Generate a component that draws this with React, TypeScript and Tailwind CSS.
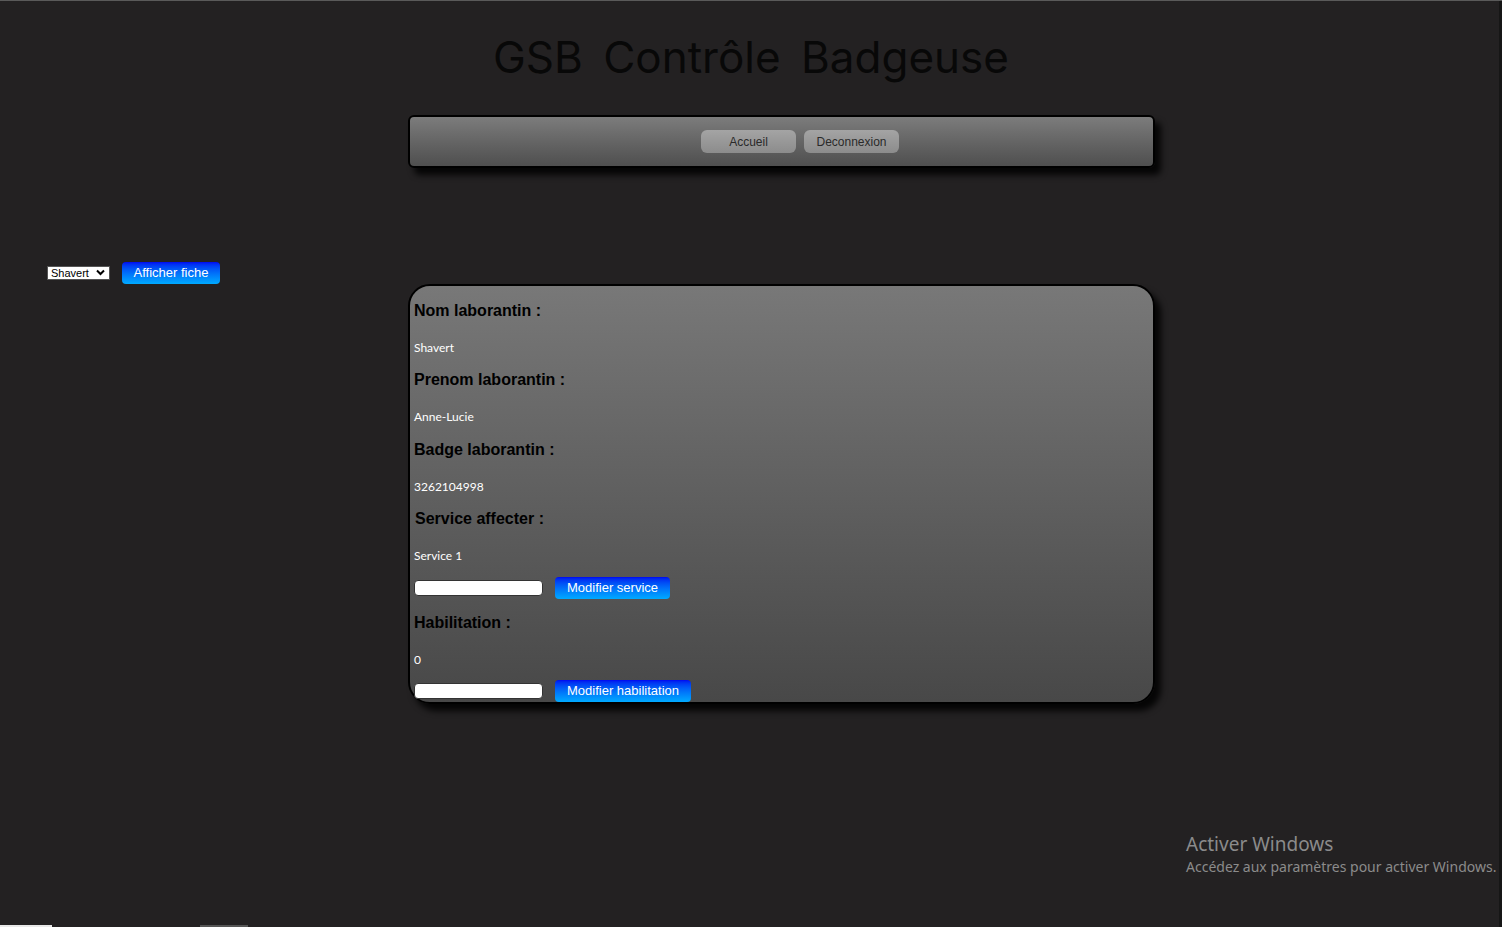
import React from 'react';

const sans = { fontFamily: 'Arial, "Liberation Sans", sans-serif' };

function Field({ label, value, indent }: { label: string; value: string; indent?: boolean }) {
  return (
    <>
      <h3
        className={`text-[16px] leading-[18px] font-bold text-black mb-[21px] ${indent ? 'pl-[1px]' : ''}`}
        style={sans}
      >
        {label}
      </h3>
      <p className="text-[12px] leading-[14px] text-white font-['Lato',sans-serif]">{value}</p>
    </>
  );
}

function EditRow({ label }: { label: string }) {
  return (
    <div className="flex items-center gap-3 h-[22px]">
      <input className="w-[129px] h-[16px] bg-white rounded-[4px] border border-[#333]" />
      <button
        className="h-[22px] px-3 rounded-[4px] bg-gradient-to-b from-[#0000f0] to-[#00aaff] text-white text-[13px] leading-[22px]"
        style={sans}
      >
        {label}
      </button>
    </div>
  );
}

export default function App() {
  return (
    <div className="relative w-full h-[927px] overflow-hidden bg-[#232122] border-t border-[#5a5a5a]">
      <h1 className="pt-[26px] text-center text-[44px] leading-[60px] font-normal text-[#080808] font-['Inter',sans-serif] [word-spacing:8px]">
        GSB Contrôle Badgeuse
      </h1>

      <nav className="mt-[28px] ml-[408px] w-[747px] h-[53px] rounded-[6px] border-2 border-black bg-gradient-to-b from-[#7c7c7c] to-[#4f4f4f] shadow-[6px_7px_6px_rgba(0,0,0,0.85)] flex items-center justify-center gap-2 pl-[37px]">
        <button className="w-[95px] h-[23px] rounded-[6px] bg-gradient-to-b from-[#a4a4a4] to-[#8c8c8c] text-[#2a2a2a] text-[12px] font-['Liberation_Sans_Narrow',sans-serif]">
          Accueil
        </button>
        <button className="w-[95px] h-[23px] rounded-[6px] bg-gradient-to-b from-[#a4a4a4] to-[#8c8c8c] text-[#2a2a2a] text-[12px] font-['Liberation_Sans_Narrow',sans-serif]">
          Deconnexion
        </button>
      </nav>

      <div className="mt-[93px] flex items-center h-[23px]">
        <div
          className="ml-[47px] w-[63px] h-[14px] bg-white border border-[#555] flex items-center justify-between px-[3px] text-[11px] leading-[12px] text-black"
          style={sans}
        >
          <span>Shavert</span>
          <svg width="9" height="7" viewBox="0 0 9 7" className="mr-[1px]">
            <path d="M1 1.5 L4.5 5 L8 1.5" stroke="black" strokeWidth="2" fill="none" />
          </svg>
        </div>
        <button
          className="ml-[12px] w-[98px] h-[22px] rounded-[4px] bg-gradient-to-b from-[#0000f0] to-[#00aaff] text-white text-[13px] leading-[22px]"
          style={sans}
        >
          Afficher fiche
        </button>
      </div>

      <section className="ml-[408px] w-[747px] h-[420px] rounded-[22px] border-2 border-black bg-gradient-to-b from-[#787878] to-[#484848] shadow-[6px_7px_6px_rgba(0,0,0,0.85)] pl-[4px] pt-[16px] flex flex-col">
        <Field label="Nom laborantin :" value="Shavert" />
        <div className="h-[16px]" />
        <Field label="Prenom laborantin :" value="Anne-Lucie" />
        <div className="h-[17px]" />
        <Field label="Badge laborantin :" value="3262104998" />
        <div className="h-[16px]" />
        <Field label="Service affecter :" value="Service 1" indent />
        <div className="h-[14px]" />
        <EditRow label="Modifier service" />
        <div className="h-[15px]" />
        <Field label="Habilitation :" value="0" />
        <div className="h-[13px]" />
        <EditRow label="Modifier habilitation" />
      </section>

      <div className="absolute left-[1186px] top-[830px] text-[#8b8b8b] font-['Noto_Sans',sans-serif]">
        <div className="text-[19px] leading-[26px]">Activer Windows</div>
        <div className="text-[14px] leading-[20px]">Accédez aux paramètres pour activer Windows.</div>
      </div>

      <div className="absolute right-0 top-0 w-[3px] h-full bg-[#161616]" />
      <div className="absolute left-0 bottom-0 w-[52px] h-[2px] bg-[#e8e8e8]" />
      <div className="absolute left-[200px] bottom-0 w-[48px] h-[2px] bg-[#555]" />
    </div>
  );
}
